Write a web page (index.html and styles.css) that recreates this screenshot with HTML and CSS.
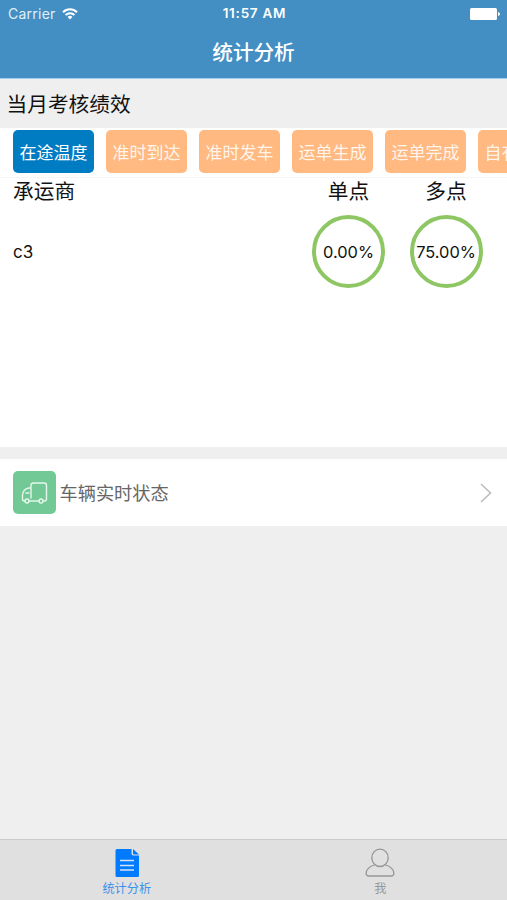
FILE: index.html
```html
<!DOCTYPE html>
<html lang="zh-CN">
<head>
<meta charset="utf-8">
<title>统计分析</title>
<link rel="stylesheet" href="styles.css">
</head>
<body>
<div class="app">
  <header class="header">
    <div class="status">
      <div class="carrier"><span>Carrier</span>
        <svg width="16" height="12" viewBox="0 0 16 12" fill="none" stroke="#fff" stroke-width="2"><path d="M1 4.200a10 10 0 0 1 14 0M3.600 7a6.300 6.300 0 0 1 8.800 0"/><path d="M8 11.500 5.600 9a3.500 3.500 0 0 1 4.800 0z" fill="#fff" stroke="none"/></svg>
      </div>
      <div class="time">11:57 AM</div>
      <svg class="battery" width="30" height="12" viewBox="0 0 30 12" fill="#fff"><rect width="27" height="12" rx="1.500"/><path d="M28 4q2 .5 2 2t-2 2z"/></svg>
    </div>
    <h1 class="title">统计分析</h1>
  </header>
  <h2 class="section">当月考核绩效</h2>
  <nav class="chips">
    <span class="chip active">在途温度</span>
    <span class="chip">准时到达</span>
    <span class="chip">准时发车</span>
    <span class="chip">运单生成</span>
    <span class="chip">运单完成</span>
    <span class="chip">自有车辆</span>
  </nav>
  <main class="table">
    <div class="row head"><span>承运商</span><span class="num">单点</span><span class="num">多点</span></div>
    <div class="row data"><span>c3</span><span class="ring">0.00%</span><span class="ring">75.00%</span></div>
  </main>
  <div class="link">
    <span class="truck"><svg width="27" height="24" viewBox="0 0 27 24" fill="none" stroke="#e4f7eb" stroke-width="1.400" stroke-linecap="round" stroke-linejoin="round"><path d="M10 17V4.500a2.500 2.500 0 0 1 2.500-2.500h10.500a2.500 2.500 0 0 1 2.500 2.500V18a2 2 0 0 1-2 2h-1M10 7H7.500C4 7.500 1.500 11 1.500 14v4a2 2 0 0 0 2 2H4M8 20h10M5 12h3"/><circle cx="6" cy="20" r="2"/><circle cx="20" cy="20" r="2"/></svg></span>
    <span class="link-text">车辆实时状态</span>
    <svg class="chevron" width="12" height="20" viewBox="0 0 12 20" fill="none" stroke="#bcbcc0" stroke-width="1.600"><path d="m1 1 9.500 9L1 19"/></svg>
  </div>
  <footer class="tabs">
    <div class="tab on">
      <svg width="24" height="30" viewBox="0 0 24 30"><path d="M2 1h14.500v4.500a2 2 0 0 0 2 2H24V27.500a1.500 1.500 0 0 1-1.500 1.500H2A1.500 1.500 0 0 1 .5 27.500v-25A1.500 1.500 0 0 1 2 1zM18 1l6 5.500h-5a1 1 0 0 1-1-1z" fill="#007aff"/><path d="M5 12.500h14M5 17.500h14M5 22h14" stroke="#d3e4f8" stroke-width="1.500"/></svg>
      <span>统计分析</span>
    </div>
    <div class="tab">
      <svg width="30" height="30" viewBox="0 0 30 30" fill="none" stroke="#969696" stroke-width="1.300"><ellipse cx="15" cy="9.800" rx="8.200" ry="8.700"/><path d="M9.500 17C4.500 18.500 1.200 21.500 1.200 25.500q0 2.500 2.800 2.500h22q2.800 0 2.800-2.500c0-4-3.300-7-8.300-8.500"/></svg>
      <span>我</span>
    </div>
  </footer>
</div>
</body>
</html>
```
FILE: styles.css
```css
* { box-sizing: border-box; }
body { margin: 0; font-family: Inter, "Noto Sans CJK SC", sans-serif; color: #111; }
.app { width: 507px; height: 900px; display: flex; flex-direction: column; background: #efefef; overflow: hidden; }
.header { height: 79px; flex: none; background: #438fc3; border-bottom: 1px solid #9ccdf0; color: #fff; }
.status { height: 27px; display: grid; grid-template-columns: 1fr auto 1fr; align-items: center; padding: 0 7px 0 8px; font-size: 14px; line-height: 27px; }
.carrier { display: flex; align-items: center; gap: 6px; color: #e0eef8; letter-spacing: .25px; }
.time { font-size: 13.500px; font-weight: 600; letter-spacing: .75px; padding-left: 1px; }
.battery { justify-self: end; }
.title { margin: 0; text-align: center; font-size: 20.600px; line-height: 52px; font-weight: 500; }
.section { flex: none; height: 49px; margin: 0; padding-left: 6.500px; font-size: 20.700px; line-height: 51px; font-weight: 400; }
.chips { height: 50px; flex: none; display: flex; gap: 12px; padding: 2px 0 0 13px; background: #fff; border-bottom: 1px solid #f5f5f5; overflow: hidden; }
.chip { flex: none; width: 81px; height: 43px; border-radius: 5px; background: #ffb981; color: #fff5ec; font-size: 17px; line-height: 46px; text-align: center; }
.chip.active { background: #007cc3; color: #fff; }
.table { height: 269px; flex: none; background: #fff; }
.row { display: grid; grid-template-columns: 1fr 73px 73px; column-gap: 24.500px; align-items: center; padding: 0 24.500px 0 13px; }
.head { height: 26px; font-size: 20.700px; line-height: 28px; }
.data { height: 95px; font-size: 17px; }
.num { text-align: center; }
.ring { width: 73px; height: 73px; border: 4px solid #8dc663; border-radius: 50%; display: flex; align-items: center; justify-content: center; font-size: 16.400px; }
.link { height: 67px; flex: none; margin-top: 12px; background: #fff; display: flex; align-items: center; padding: 0 15px 0 13px; }
.truck { width: 43px; height: 43px; border-radius: 5px; background: #72c995; display: flex; align-items: center; justify-content: center; }
.link-text { margin: 0 0 2px 3.500px; flex: 1; font-size: 18.200px; color: #666; }
.tabs { height: 61px; margin-top: auto; background: #e0e0e0; border-top: 1px solid #cacaca; display: flex; }
.tab { flex: 1; display: flex; flex-direction: column; align-items: center; padding-top: 8px; font-size: 12.200px; line-height: 22px; color: #969696; }
.tab svg { display: block; }
.tab.on { color: #3d91ea; }
```
